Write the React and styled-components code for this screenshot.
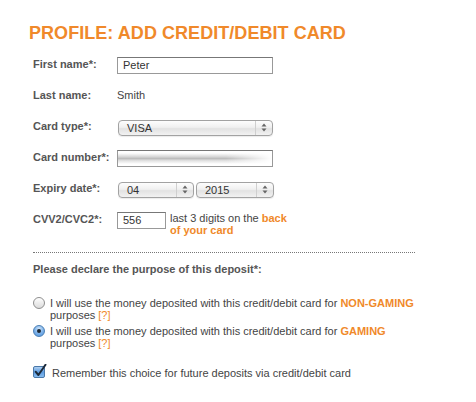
import styled, { createGlobalStyle } from 'styled-components';

const GlobalStyle = createGlobalStyle`
    body {
        margin : 0;
        background : #fff;
        font-family : "Liberation Sans", Arial, Helvetica, sans-serif;
    }
`;

const ORANGE = '#f0892a';

const SelectBox = ({ value, width }) => (
    <SelectStyled $width={ width }>
        <SelectValue>{ value }</SelectValue>
        <SelectArrows>
            <svg width="6" height="9" viewBox="0 0 6 9">
                <path d="M3 0.5 L5.5 3.5 H0.5 Z" fill="#666" />
                <path d="M3 8.5 L5.5 5.5 H0.5 Z" fill="#666" />
            </svg>
        </SelectArrows>
    </SelectStyled>
);

const Radio = ({ checked }) => (
    <RadioStyled $checked={ checked }>
        { checked && <RadioDot /> }
    </RadioStyled>
);

const CheckMark = () => (
    <svg width="14" height="15" viewBox="0 0 14 15">
        <defs>
            <linearGradient id="cbg" x1="0" y1="0" x2="0" y2="1">
                <stop offset="0" stopColor="#b9d6f3" />
                <stop offset="0.5" stopColor="#5b9be0" />
                <stop offset="1" stopColor="#8cc0f2" />
            </linearGradient>
        </defs>
        <rect x="0.5" y="2.5" width="11" height="11" rx="1.5" fill="url(#cbg)" stroke="#4a78a8" />
        <path d="M2.8 7.8 L5.4 11 L12.5 0.8" fill="none" stroke="#1c2a3a" strokeWidth="2" strokeLinecap="round" strokeLinejoin="round" />
    </svg>
);

const App = () => {
    return (
        <>
            <GlobalStyle />
            <Page>
                <Title>PROFILE: ADD CREDIT/DEBIT CARD</Title>
                <Form>
                    <Row>
                        <Label>First name*:</Label>
                        <TextInput $width={ 156 }>Peter</TextInput>
                    </Row>
                    <Row>
                        <Label>Last name:</Label>
                        <Value>Smith</Value>
                    </Row>
                    <Row>
                        <Label>Card type*:</Label>
                        <SelectBox value="VISA" width={ 155 } />
                    </Row>
                    <Row>
                        <Label>Card number*:</Label>
                        <TextInput $width={ 156 }><Blurred /></TextInput>
                    </Row>
                    <Row>
                        <Label>Expiry date*:</Label>
                        <SelectGroup>
                            <SelectBox value="04" width={ 76 } />
                            <SelectBox value="2015" width={ 78 } />
                        </SelectGroup>
                    </Row>
                    <Row $top>
                        <Label>CVV2/CVC2*:</Label>
                        <TextInput $width={ 49 }>556</TextInput>
                        <Hint>last 3 digits on the <Accent>back of your card</Accent></Hint>
                    </Row>
                </Form>
                <Divider />
                <Question>Please declare the purpose of this deposit*:</Question>
                <Options>
                    <Option>
                        <Radio />
                        <OptionText>
                            I will use the money deposited with this credit/debit card for <Accent>NON-GAMING</Accent> purposes <Help>[?]</Help>
                        </OptionText>
                    </Option>
                    <Option>
                        <Radio checked />
                        <OptionText>
                            I will use the money deposited with this credit/debit card for <Accent>GAMING</Accent> purposes <Help>[?]</Help>
                        </OptionText>
                    </Option>
                </Options>
                <Remember>
                    <CheckMark />
                    <OptionText>Remember this choice for future deposits via credit/debit card</OptionText>
                </Remember>
            </Page>
        </>
    );
};

const Page = styled.div`
    padding : 22px 0 0 29px;
    width : 400px;
    color : #444;
    font-size : 11px;
`;

const Title = styled.h1`
    margin : 0 0 13px;
    font-size : 18px;
    line-height : 22px;
    font-weight : bold;
    color : ${ORANGE};
    letter-spacing : 0.05px;
`;

const Form = styled.div`
    padding-left : 4px;
    display : flex;
    flex-direction : column;
    gap : 14px;
`;

const Row = styled.div`
    display : flex;
    align-items : ${({ $top }) => $top ? 'flex-start' : 'center'};
    height : 17px;
`;

const Label = styled.div`
    width : 84px;
    flex-shrink : 0;
    font-weight : bold;
    color : #555;
    margin-top : -4px;
    align-self : center;
`;

const Value = styled.div`
    color : #444;
    margin-top : -3px;
`;

const TextInput = styled.div`
    box-sizing : border-box;
    width : ${({ $width }) => $width}px;
    height : 17px;
    border : 1px solid #999;
    border-top-color : #777;
    padding : 0 5px;
    line-height : 15px;
    color : #333;
    position : relative;
    overflow : hidden;
`;

const Blurred = styled.div`
    position : absolute;
    inset : 2px 0 2px 0;
    background :
        linear-gradient(to right, rgba(255,255,255,0) 70%, #fff 100%),
        linear-gradient(to bottom, #fff 0%, #d6d6d6 35%, #bdbdbd 50%, #e2e2e2 70%, #fff 100%);
`;

const SelectGroup = styled.div`
    display : flex;
    gap : 1px;
`;

const SelectStyled = styled.div`
    box-sizing : border-box;
    width : ${({ $width }) => $width}px;
    height : 16px;
    margin-left : 1px;
    border : 1px solid #a2a2a2;
    border-radius : 4px;
    background : linear-gradient(to bottom, #fdfdfd 0%, #f0f0f0 45%, #e2e2e2 55%, #f2f2f2 100%);
    display : flex;
    align-items : center;
    box-shadow : 0 1px 1px rgba(0,0,0,0.08);
`;

const SelectValue = styled.div`
    flex : 1;
    padding-left : 8px;
    color : #333;
    line-height : 14px;
`;

const SelectArrows = styled.div`
    width : 16px;
    height : 14px;
    border-left : 1px solid #cfcfcf;
    display : flex;
    align-items : center;
    justify-content : center;
`;

const Hint = styled.div`
    width : 120px;
    margin-left : 4px;
    margin-top : 0;
    line-height : 12px;
    color : #444;
`;

const Accent = styled.span`
    color : ${ORANGE};
    font-weight : bold;
`;

const Help = styled.span`
    color : ${ORANGE};
`;

const Divider = styled.div`
    margin : 23px 0 0 4px;
    width : 382px;
    border-top : 1px dotted #777;
`;

const Question = styled.div`
    margin : 10px 0 0 4px;
    font-weight : bold;
    color : #555;
`;

const Options = styled.div`
    margin : 22px 0 0 4px;
    display : flex;
    flex-direction : column;
    gap : 4px;
`;

const Option = styled.div`
    display : flex;
    align-items : flex-start;
    gap : 5px;
`;

const OptionText = styled.div`
    width : 372px;
    line-height : 12px;
    color : #444;
`;

const RadioStyled = styled.span`
    box-sizing : border-box;
    width : 12px;
    height : 12px;
    flex-shrink : 0;
    border-radius : 50%;
    border : 1px solid ${({ $checked }) => $checked ? '#4b7fb4' : '#8e8e8e'};
    background : ${({ $checked }) => $checked
        ? 'radial-gradient(circle at 50% 30%, #d4e8fb 0%, #7fb3ea 50%, #4b91dc 100%)'
        : 'linear-gradient(to bottom, #fff 0%, #ececec 50%, #dcdcdc 100%)'};
    display : flex;
    align-items : center;
    justify-content : center;
`;

const RadioDot = styled.span`
    width : 4px;
    height : 4px;
    border-radius : 50%;
    background : #1a2633;
`;

const Remember = styled.div`
    margin : 15px 0 0 4px;
    display : flex;
    align-items : flex-end;
    gap : 5px;
`;

export default App;
